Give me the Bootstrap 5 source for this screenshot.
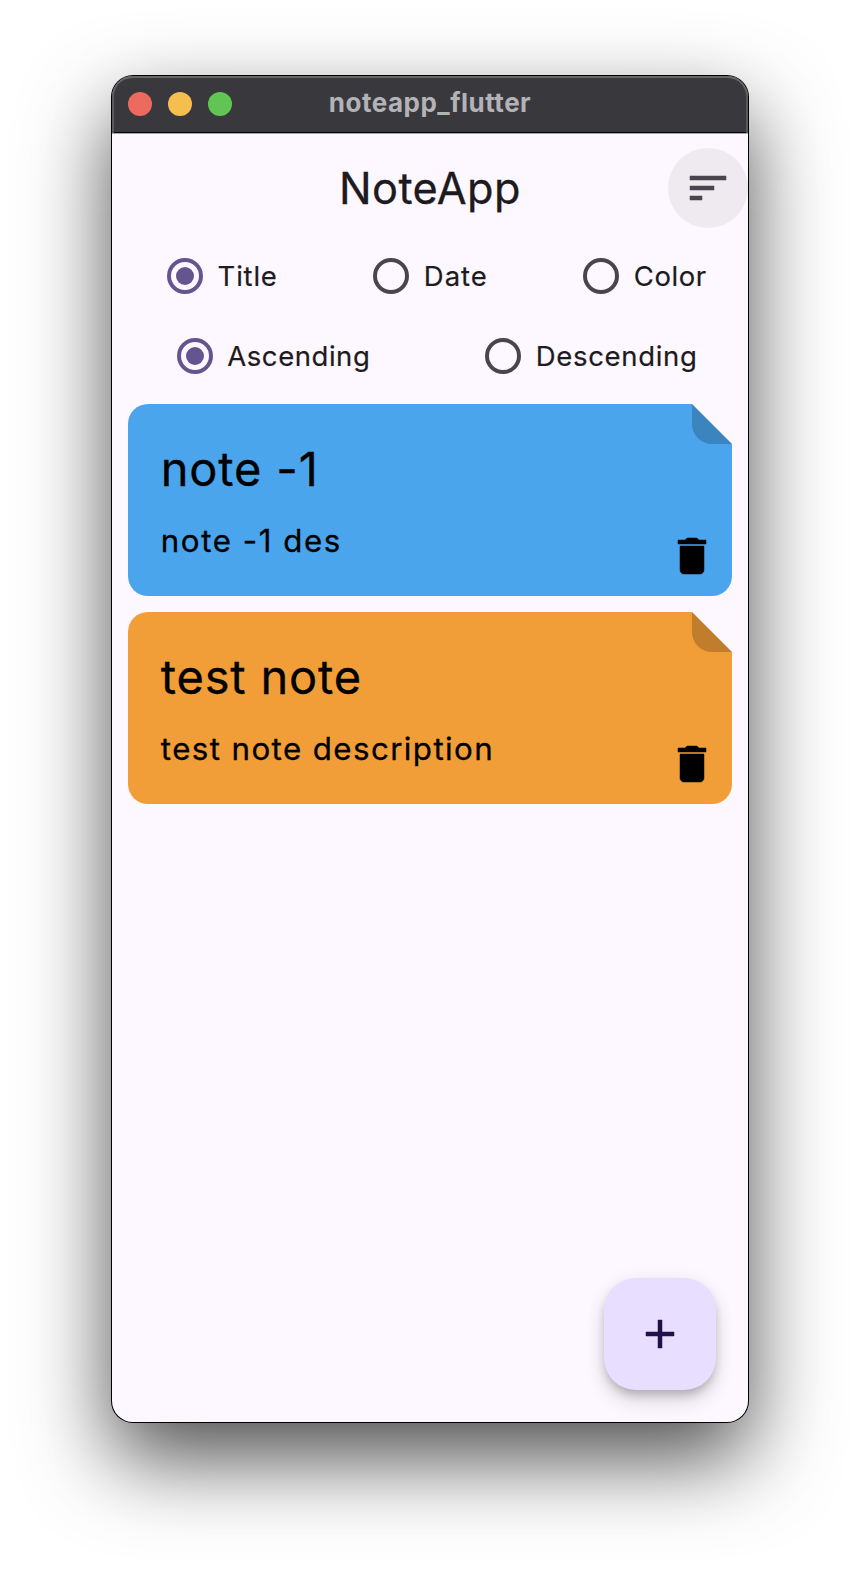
<!DOCTYPE html>
<html lang="en">
<head>
<meta charset="utf-8">
<meta name="viewport" content="width=device-width, initial-scale=1">
<title>noteapp_flutter</title>
<link href="https://cdn.jsdelivr.net/npm/bootstrap@5.3.0/dist/css/bootstrap.min.css" rel="stylesheet">
<style>
  body { background: #fff; font-family: Inter, "Liberation Sans", sans-serif; color: #1d1b20; overflow: hidden; }
  .desktop { padding: 76px 0 0 112px; height: 1570px; overflow: hidden; }
  .app-window { width: 636px; height: 1346px; border-radius: 21px; background: #fdf8ff;
    box-shadow: 0 0 0 1px #000, 0 36px 86px rgba(0,0,0,.7); }
  .title-bar { height: 58px; flex: none; background: #39383d; border-radius: 21px 21px 0 0; position: relative;
    border-bottom: 1px solid #aaa7ac; box-shadow: inset 0 2px 0 #67666b, inset 2px 0 0 #5a595e, inset -2px 0 0 #5a595e, inset 0 -1px 0 #000; padding: 0 16px; }
  .light { width: 24px; height: 24px; border-radius: 50%; }
  .light-close { background: #ed6a5e; }
  .light-min { background: #f5bf4f; }
  .light-max { background: #61c554; }
  .lights { gap: 16px; width: 104px; margin-top: -1px; }
  .win-title { font-size: 26px; font-weight: 700; letter-spacing: .5px; color: #b3b2b7; line-height: 32px; margin-top: -3px; }
  .app-bar { height: 80px; margin: 14px 0 8px; flex: none; }
  .app-bar-side { width: 80px; }
  .app-title { font-size: 43.3px; letter-spacing: .42px; line-height: 56px; -webkit-text-stroke: .3px currentColor; }
  .sort-btn { width: 80px; height: 80px; border-radius: 50%; background: #eeeaf0; border: 0; padding: 0; color: #49454f; }
  .sort-btn path, .fab path, .trash path { stroke: currentColor; stroke-width: .25; }
  .opt-row { height: 80px; flex: none; }
  .opt { gap: 14.6px; font-size: 27.5px; line-height: 40px; -webkit-text-stroke: .2px currentColor; }
  .opt svg { flex: none; color: #49454f; }
  .opt.checked svg { color: #65558f; }
  .opt-title { padding-left: 55px; letter-spacing: .8px; }
  .opt-date { padding-left: 49.2px; letter-spacing: 1px; }
  .opt-color { padding-left: 47.2px; letter-spacing: .57px; }
  .opt-asc { padding-left: 64.7px; letter-spacing: .55px; }
  .opt-desc { padding-left: 55.2px; letter-spacing: .68px; }
  .notes { padding: 8px 16px; gap: 16px; }
  .note { height: 192px; border-radius: 20px; color: #000; position: relative; padding: 36.6px 32.8px 0;
    clip-path: polygon(0 0, calc(100% - 40px) 0, 100% 40px, 100% 100%, 0 100%); -webkit-text-stroke: .3px currentColor; }
  .note::after { content: ""; position: absolute; top: 0; right: 0; width: 40px; height: 40px;
    border-bottom-left-radius: 20px; background: rgba(0,0,0,.2); }
  .note-blue { background: #4ba5ed; }
  .note-orange { background: #f19e38; }
  .note-title { font-size: 47px; line-height: 56px; margin: 0 0 22.6px; font-weight: 400; }
  .note-text { font-size: 31.3px; line-height: 44px; margin: 0; }
  .note-blue .note-title { letter-spacing: .8px; }
  .note-blue .note-text { letter-spacing: 1.55px; }
  .note-orange .note-title { letter-spacing: .78px; }
  .note-orange .note-text { letter-spacing: 1.4px; }
  .trash { position: absolute; right: 16px; bottom: 16px; }
  .fab { width: 112px; height: 112px; border-radius: 32px; border: 0; background: #e8deff; color: #21104a; margin: 0 32px 32px 0;
    box-shadow: 0 6px 10px -2px rgba(0,0,0,.2), 0 12px 20px rgba(0,0,0,.12), 0 2px 20px rgba(0,0,0,.06); }
</style>
</head>
<body>
<div class="desktop">
  <main class="app-window d-flex flex-column">
    <header class="title-bar d-flex align-items-center justify-content-between">
      <div class="lights d-flex">
        <span class="light light-close"></span>
        <span class="light light-min"></span>
        <span class="light light-max"></span>
      </div>
      <div class="win-title">noteapp_flutter</div>
      <div class="lights"></div>
    </header>

    <div class="app-bar d-flex align-items-center justify-content-between">
      <span class="app-bar-side"></span>
      <div class="app-title">NoteApp</div>
      <button class="sort-btn d-flex align-items-center justify-content-center" aria-label="Sort">
        <svg width="48" height="48" viewBox="0 0 24 24" fill="currentColor"><path d="M3 18h6v-2H3v2zM3 6v2h18V6H3zm0 7h12v-2H3v2z"/></svg>
      </button>
    </div>

    <div class="opt-row row g-0 align-items-center">
      <div class="col-4 opt opt-title checked d-flex align-items-center">
        <svg width="36" height="36" viewBox="0 0 36 36"><circle cx="18" cy="18" r="16" fill="none" stroke="currentColor" stroke-width="4"/><circle cx="18" cy="18" r="9" fill="currentColor"/></svg>Title</div>
      <div class="col-4 opt opt-date d-flex align-items-center">
        <svg width="36" height="36" viewBox="0 0 36 36"><circle cx="18" cy="18" r="16" fill="none" stroke="currentColor" stroke-width="4"/></svg>Date</div>
      <div class="col-4 opt opt-color d-flex align-items-center">
        <svg width="36" height="36" viewBox="0 0 36 36"><circle cx="18" cy="18" r="16" fill="none" stroke="currentColor" stroke-width="4"/></svg>Color</div>
    </div>
    <div class="opt-row row g-0 align-items-center">
      <div class="col-6 opt opt-asc checked d-flex align-items-center">
        <svg width="36" height="36" viewBox="0 0 36 36"><circle cx="18" cy="18" r="16" fill="none" stroke="currentColor" stroke-width="4"/><circle cx="18" cy="18" r="9" fill="currentColor"/></svg>Ascending</div>
      <div class="col-6 opt opt-desc d-flex align-items-center">
        <svg width="36" height="36" viewBox="0 0 36 36"><circle cx="18" cy="18" r="16" fill="none" stroke="currentColor" stroke-width="4"/></svg>Descending</div>
    </div>

    <section class="notes d-flex flex-column">
      <article class="note note-blue">
        <h2 class="note-title">note -1</h2>
        <p class="note-text">note -1 des</p>
        <svg class="trash" width="48" height="48" viewBox="0 0 24 24"><path d="M6 19c0 1.1.9 2 2 2h8c1.1 0 2-.9 2-2V7H6v12zM19 4h-3.5l-1-1h-5l-1 1H5v2h14V4z"/></svg>
      </article>
      <article class="note note-orange">
        <h2 class="note-title">test note</h2>
        <p class="note-text">test note description</p>
        <svg class="trash" width="48" height="48" viewBox="0 0 24 24"><path d="M6 19c0 1.1.9 2 2 2h8c1.1 0 2-.9 2-2V7H6v12zM19 4h-3.5l-1-1h-5l-1 1H5v2h14V4z"/></svg>
      </article>
    </section>

    <button class="fab d-flex align-items-center justify-content-center mt-auto ms-auto" aria-label="Add note">
      <svg width="48" height="48" viewBox="0 0 24 24" fill="currentColor"><path d="M19 13h-6v6h-2v-6H5v-2h6V5h2v6h6v2z"/></svg>
    </button>
  </main>
</div>
<script src="https://cdn.jsdelivr.net/npm/bootstrap@5.3.0/dist/js/bootstrap.bundle.min.js"></script>
</body>
</html>
